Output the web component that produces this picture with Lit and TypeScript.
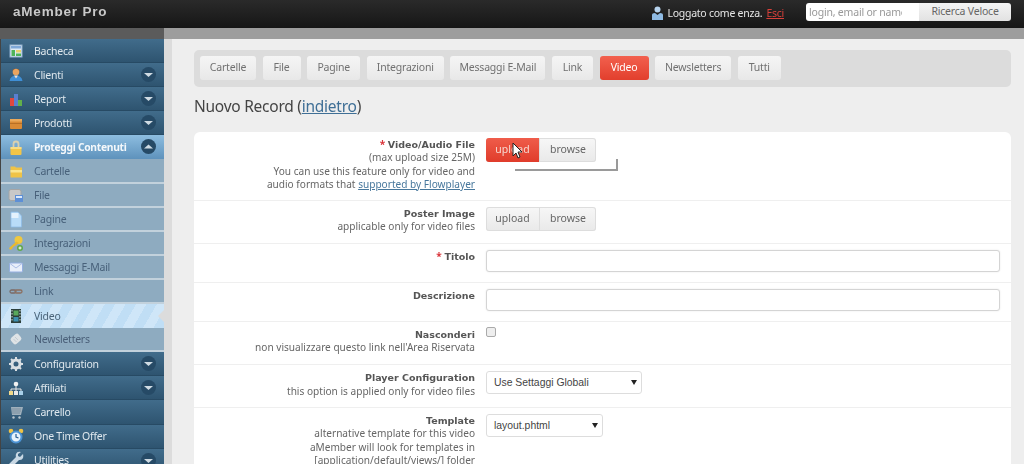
import { LitElement, html, css, svg } from "lit";
import { customElement } from "lit/decorators.js";

const icons: Record<string, unknown> = {
  dash: svg`<rect x="3" y="3" width="12" height="12" fill="#dfeaf4" stroke="#8fb0cf"/><rect x="4" y="4" width="10" height="2.500" fill="#7fa8d8"/><rect x="4.500" y="8" width="3.500" height="6" fill="#4fb45a"/><rect x="9" y="8" width="5" height="2.500" fill="#e8d36a"/><rect x="9" y="11.500" width="5" height="2.500" fill="#4fb45a"/>`,
  user: svg`<circle cx="9" cy="6" r="3.300" fill="#e9a45f"/><path d="M5.500 5q3.500-4.500 7 0l-1-2h-5z" fill="#a3541f"/><path d="M2.500 15q1-5.500 6.500-5.500t6.500 5.500z" fill="#3f8fd6"/><path d="M7 9.500h4l-2 3z" fill="#f0e0d0"/>`,
  report: svg`<rect x="3" y="8" width="4" height="8" fill="#e0483f"/><rect x="7" y="4" width="4" height="12" fill="#5a7fd0"/><rect x="11" y="10" width="4" height="6" fill="#62b04a"/>`,
  box: svg`<rect x="3" y="5" width="12" height="10" rx="1" fill="#d98a35"/><rect x="3" y="5" width="12" height="2.500" fill="#eba95a"/><rect x="3" y="9" width="12" height="1" fill="#b86f24"/>`,
  lock: svg`<path d="M6.500 9V6a2.500 2.500 0 0 1 5 0v3" fill="none" stroke="#d8d0b0" stroke-width="1.800"/><rect x="3.500" y="9" width="11" height="8" rx="1" fill="#f2c548"/><rect x="3.500" y="9" width="11" height="2" fill="#f8dd85"/>`,
  folder: svg`<path d="M3.500 4.500h4.500l1 1h6v10h-11.500z" fill="#efc346"/><rect x="3.500" y="8" width="11.500" height="2.500" fill="#f9e58e"/>`,
  file: svg`<rect x="2" y="3.500" width="12" height="11" rx="2" fill="#c8c8c8" stroke="#a5a5a5"/><rect x="8" y="9" width="8" height="7" fill="#5d8fd6"/><rect x="9" y="10" width="6" height="2" fill="#dce9fa"/>`,
  page: svg`<path d="M4 2h7l3.500 4v11H4z" fill="#b9dcf8" stroke="#8dbce8" stroke-width=".7"/><rect x="4.500" y="3" width="7" height="5" fill="#e4f2fd"/>`,
  key: svg`<circle cx="11.500" cy="6" r="4" fill="#f0c83e"/><path d="M9.500 7.500 2 14l1 2 2-1 1-2 2-1 4-3z" fill="#e8b92e"/><circle cx="13" cy="14" r="3" fill="#5fa84a"/><path d="M13 12.500v3M11.500 14h3" stroke="#fff"/>`,
  mail: svg`<rect x="2.500" y="5" width="13" height="9" rx="1" fill="#e9effa" stroke="#94aee0"/><path d="M3 5.500 9 10l6-4.500" fill="none" stroke="#a9bde6"/>`,
  link: svg`<rect x="3" y="8" width="6" height="3" rx="1.500" fill="none" stroke="#7a6a66" stroke-width="1.300"/><rect x="8" y="8" width="7" height="3" rx="1.500" fill="none" stroke="#8b6f60" stroke-width="1.300"/>`,
  film: svg`<rect x="4" y="2" width="10" height="14" fill="#2c3f3b"/><rect x="6.500" y="3.500" width="5" height="5" fill="#58a85c"/><rect x="6.500" y="10" width="5" height="4.500" fill="#3d8fb0"/><path d="M5 3v12M13 3v12" stroke="#cfe0d8" stroke-dasharray="1.500 1.500"/>`,
  tag: svg`<rect x="4" y="5" width="10" height="8" rx="2.500" transform="rotate(-40 9 9)" fill="#dfe3e6"/><path d="M8 7l3 3M6.500 9l3 3" stroke="#bcc5ca" stroke-width=".8"/>`,
  gear: svg`<circle cx="9" cy="9" r="4" fill="none" stroke="#d9dfe3" stroke-width="3"/><path d="M9 2v3M9 13v3M2 9h3M13 9h3M4 4l2 2M12 12l2 2M4 14l2-2M12 6l2-2" stroke="#d9dfe3" stroke-width="2"/>`,
  tree: svg`<circle cx="9" cy="5" r="2.300" fill="#f2f2f2"/><path d="M4 12v-2h10v2M9 7v5" fill="none" stroke="#e6e6e6"/><rect x="2" y="12" width="4" height="4" fill="#f1d98a"/><rect x="7" y="12" width="4" height="4" fill="#e9e9e9"/><rect x="12" y="12" width="4" height="4" fill="#a8cfe8"/>`,
  cart: svg`<path d="M3 4h13l-2 8H5L4 4z" fill="#9fb0bc"/><path d="M5 6h9M5 8h9M5 10h8" stroke="#6f8595" stroke-width=".7"/><circle cx="6.500" cy="14.500" r="1.200" fill="#b8c4cc"/><circle cx="12.500" cy="14.500" r="1.200" fill="#b8c4cc"/>`,
  clock: svg`<circle cx="4" cy="4" r="2.300" fill="#efc346"/><circle cx="14" cy="4" r="2.300" fill="#efc346"/><circle cx="9" cy="10" r="5.500" fill="#e9f3fb" stroke="#4c93d4" stroke-width="2"/><path d="M9 7v3l2.500 1" fill="none" stroke="#2b5f95" stroke-width="1.200"/>`,
  wrench: svg`<path d="M16 3l-3 3-2-1 0-2 3-2q-4-1-5 2-.5 2 0 3L2 13v3h3l7-7q3 .5 4-2 .5-2 0-4z" fill="#c9d8e4"/>`,
};

type Item = { t: string; i: string; k: "top" | "open" | "sub" | "cur" | "dim"; c?: "d" | "u" };
const items: Item[] = [
  { t: "Bacheca", i: "dash", k: "top" },
  { t: "Clienti", i: "user", k: "top", c: "d" },
  { t: "Report", i: "report", k: "top", c: "d" },
  { t: "Prodotti", i: "box", k: "top", c: "d" },
  { t: "Proteggi Contenuti", i: "lock", k: "open", c: "u" },
  { t: "Cartelle", i: "folder", k: "sub" },
  { t: "File", i: "file", k: "sub" },
  { t: "Pagine", i: "page", k: "sub" },
  { t: "Integrazioni", i: "key", k: "sub" },
  { t: "Messaggi E-Mail", i: "mail", k: "sub" },
  { t: "Link", i: "link", k: "sub" },
  { t: "Video", i: "film", k: "cur" },
  { t: "Newsletters", i: "tag", k: "dim" },
  { t: "Configuration", i: "gear", k: "top", c: "d" },
  { t: "Affiliati", i: "tree", k: "top", c: "d" },
  { t: "Carrello", i: "cart", k: "top" },
  { t: "One Time Offer", i: "clock", k: "top" },
  { t: "Utilities", i: "wrench", k: "top", c: "d" },
];

const tabs: [string, number][] = [
  ["Cartelle", 56], ["File", 38], ["Pagine", 53], ["Integrazioni", 77], ["Messaggi E-Mail", 95],
  ["Link", 41], ["Video", 49], ["Newsletters", 76], ["Tutti", 43],
];

@customElement("app-root")
export class AppRoot extends LitElement {
  static styles = css`
    :host { display: block; width: 1024px; height: 464px; overflow: hidden; background: #eee; font-family: "DejaVu Sans", sans-serif; }
    .page { width: 1024px; height: 464px; display: flex; flex-direction: column; overflow: hidden; filter: blur(0.6px); }
    .top { height: 28px; flex: none; display: flex; align-items: center; padding: 0 13px; background: linear-gradient(#2a2a2a, #161616); color: #e6e6e6; font-family: "Liberation Sans", sans-serif; }
    .logo { font-weight: bold; font-size: 13.500px; letter-spacing: 0.800px; color: #c9c9c9; position: relative; top: -3px; }
    .who { margin-left: auto; display: flex; align-items: center; gap: 3px; font-family: "Noto Sans", sans-serif; font-size: 10.500px; letter-spacing: -0.250px; position: relative; top: -1px; }
    .who svg { width: 13px; height: 15px; }
    .who a { color: #d8403a; text-decoration: underline; margin-left: 1px; }
    .search { margin-left: 22px; display: flex; width: 205px; height: 18px; border-radius: 3px; overflow: hidden; position: relative; top: -2px; font-size: 10.500px; letter-spacing: -0.200px; font-family: "Noto Sans", sans-serif; }
    .search .in { width: 113px; background: #fff; border-right: 17px solid #fff; color: #999; padding-left: 3px; line-height: 18px; white-space: nowrap; overflow: hidden; box-sizing: border-box; }
    .search .bt { flex: 1; background: linear-gradient(#f4f4f4, #e2e2e2); color: #666; text-align: center; line-height: 17px; }
    .strip { height: 11px; flex: none; display: flex; background: #9d9d9d; }
    .strip div { width: 164px; background: #5b5b5b; }
    .main { flex: 1; display: flex; min-height: 0; }
    .side { width: 163px; flex: none; margin-left: 1px; box-shadow: -1px 0 0 #444; font-family: "Noto Sans", sans-serif; font-size: 10.500px; letter-spacing: -0.250px; }
    .gut { width: 8px; flex: none; background: #dcdcdc; }
    .row { height: 24.100px; box-sizing: border-box; display: flex; align-items: center; position: relative; }
    .row svg.ic { width: 18px; height: 18px; margin-left: 6px; flex: none; }
    .row span { margin-left: 9px; white-space: nowrap; }
    .top-r { background: linear-gradient(#416c8b, #2e5470); color: #dfe8ee; border-bottom: 1px solid #274a64; }
    .open { background: linear-gradient(#8dbde0, #5e92bc); color: #f4f8fb; font-weight: bold; }
    .open span { font-size: 10.300px; letter-spacing: -0.300px; }
    .sub { background: #8eabc0; color: #48617a; border-bottom: 2px solid #c2d1dc; }
    .dim { background: #8eabc0; color: #4a5f78; border-bottom: 2px solid #c2d1dc; }
    .cur { background: repeating-linear-gradient(120deg, #c0def5 0 9px, #cfe6f8 9px 18px); color: #4a6378; }
    .cur::after { content: ""; position: absolute; right: 0; top: 6px; border: 6px solid transparent; border-right-color: #dcdcdc; border-left-width: 0; }
    .chev { position: absolute; left: 140px; top: 4px; width: 15px; height: 15px; border-radius: 50%; background: #264a66; }
    .chev svg { display: block; width: 15px; height: 15px; }
    .content { flex: 1; min-width: 0; padding: 11px 13px 0 22px; background: #eee; }
    .tabs { display: flex; gap: 6.600px; height: 37px; box-sizing: border-box; padding: 5.500px 6px; background: #dcdcdc; border-radius: 5px; font-family: "Noto Sans", sans-serif; font-size: 10.500px; letter-spacing: -0.200px; }
    .tab { height: 24px; line-height: 23px; text-align: center; border-radius: 3px; background: linear-gradient(#f5f5f5, #e8e8e8); color: #717171; white-space: nowrap; }
    .tab.on { background: linear-gradient(#f2604e, #e23f2d); color: #fff; }
    h1 { margin: 9px 0 0; height: 36px; font-weight: normal; font-family: "Noto Sans", sans-serif; font-size: 15.500px; letter-spacing: -0.250px; line-height: 20px; color: #444; }
    h1 a { color: #3f6f96; text-decoration: underline; }
    .card { background: #fff; border-radius: 6px 6px 0 0; font-family: "Noto Sans", sans-serif; font-size: 10.100px; line-height: 13.300px; color: #666; }
    .f { display: flex; padding: 6px 0 9px; border-bottom: 1px solid #efefef; }
    .f.tight { padding-bottom: 10px; }
    .lab { width: 281px; text-align: right; flex: none; }
    .lab b { font-family: "DejaVu Sans", sans-serif; font-size: 9.500px; color: #555; }
    .lab i { font-style: normal; color: #d9343a; font-weight: bold; }
    .lab a { color: #47779c; text-decoration: underline; }
    .ctl { margin-left: 11px; flex: 1; margin-right: 11px; position: relative; }
    .grp { display: flex; width: 110px; height: 24px; border-radius: 3px; overflow: hidden; box-shadow: 0 0 0 1px #ddd inset; line-height: 23px; text-align: center; font-size: 10.500px; color: #666; background: linear-gradient(#f7f7f7, #e9e9e9); }
    .grp div { flex: 1; }
    .grp div:first-child { flex: 0 0 54px; border-right: 1px solid #ddd; box-sizing: border-box; }
    .grp .act { background: linear-gradient(#ef5c4a, #e03c2b); color: #f6d8d0; border: 0; }
    .inp { height: 22px; box-sizing: border-box; border: 1px solid #d4d4d4; border-radius: 3px; background: #fff; box-shadow: 0 0 2px #e8e8e8; }
    .cb { display: block; width: 10px; height: 10px; margin-top: -1px; box-sizing: border-box; border: 1px solid #aaa; border-radius: 2px; background: #eee; }
    .sel { height: 23px; display: flex; align-items: center; justify-content: space-between; box-sizing: border-box; padding: 0 4px 0 7px; border: 1px solid #ddd; border-radius: 3px; background: #fff; color: #444; font-family: "Liberation Sans", sans-serif; font-size: 10.400px; }
    .sel svg { width: 6px; height: 5px; }
    .w1 { width: 156px; }
    .w2 { width: 117px; }
    .note { position: absolute; left: 29px; top: 21px; width: 103px; height: 12px; box-sizing: border-box; border-right: 2px solid #9a9a9a; border-bottom: 2px solid #9a9a9a; }
    .cursor { position: absolute; left: 26px; top: 4px; width: 12px; height: 17px; }
  `;

  render() {
    const chev = (dir: "d" | "u") => html`<div class="chev"><svg viewBox="0 0 15 15"><path d=${dir === "d" ? "M3 6h9L7.500 10z" : "M3 9.500h9L7.500 5.500z"} fill="#cfdbe3"/></svg></div>`;
    const cls = (k: Item["k"]) => (k === "top" ? "top-r" : k);
    return html`<div class="page">
      <div class="top">
        <div class="logo">aMember Pro</div>
        <div class="who">
          <svg viewBox="0 0 13 15"><circle cx="6.500" cy="3.500" r="3" fill="#b7d3ee"/><path d="M1 14V9q0-2 3-2l2.500 2L9 7q3 0 3 2v5z" fill="#8fbbe4"/></svg>
          <span>Loggato come enza.</span> <a>Esci</a>
        </div>
        <div class="search"><div class="in">login, email or name</div><div class="bt">Ricerca Veloce</div></div>
      </div>
      <div class="strip"><div></div></div>
      <div class="main">
        <div class="side">
          ${items.map((it) => html`<div class="row ${cls(it.k)}">
            <svg class="ic" viewBox="0 0 18 18">${icons[it.i]}</svg>
            <span>${it.t}</span>
            ${it.c ? chev(it.c) : ""}
          </div>`)}
        </div>
        <div class="gut"></div>
        <div class="content">
          <div class="tabs">${tabs.map(([t, w]) => html`<div class="tab ${t === "Video" ? "on" : ""}" style="width:${w}px">${t}</div>`)}</div>
          <h1>Nuovo Record (<a>indietro</a>)</h1>
          <div class="card">
            <div class="f">
              <div class="lab"><i>*</i> <b>Video/Audio File</b><br>(max upload size 25M)<br>You can use this feature only for video and<br>audio formats that <a>supported by Flowplayer</a></div>
              <div class="ctl">
                <div class="grp"><div class="act">upload</div><div>browse</div></div>
                <div class="note"></div>
                <svg class="cursor" viewBox="0 0 12 17"><path d="M1 1v13l3-3 2 5 2-1-2-5h4z" fill="#fff" stroke="#222"/></svg>
              </div>
            </div>
            <div class="f">
              <div class="lab"><b>Poster Image</b><br>applicable only for video files</div>
              <div class="ctl"><div class="grp"><div>upload</div><div>browse</div></div></div>
            </div>
            <div class="f tight">
              <div class="lab"><i>*</i> <b>Titolo</b></div>
              <div class="ctl"><div class="inp"></div></div>
            </div>
            <div class="f tight">
              <div class="lab"><b>Descrizione</b></div>
              <div class="ctl"><div class="inp"></div></div>
            </div>
            <div class="f tight">
              <div class="lab"><b>Nasconderi</b><br>non visualizzare questo link nell'Area Riservata</div>
              <div class="ctl"><span class="cb"></span></div>
            </div>
            <div class="f">
              <div class="lab"><b>Player Configuration</b><br>this option is applied only for video files</div>
              <div class="ctl"><div class="sel w1">Use Settaggi Globali<svg viewBox="0 0 6 5"><path d="M0 0h6L3 5z" fill="#222"/></svg></div></div>
            </div>
            <div class="f">
              <div class="lab"><b>Template</b><br>alternative template for this video<br>aMember will look for templates in<br>[application/default/views/] folder</div>
              <div class="ctl"><div class="sel w2">layout.phtml<svg viewBox="0 0 6 5"><path d="M0 0h6L3 5z" fill="#222"/></svg></div></div>
            </div>
          </div>
        </div>
      </div>
    </div>`;
  }
}
